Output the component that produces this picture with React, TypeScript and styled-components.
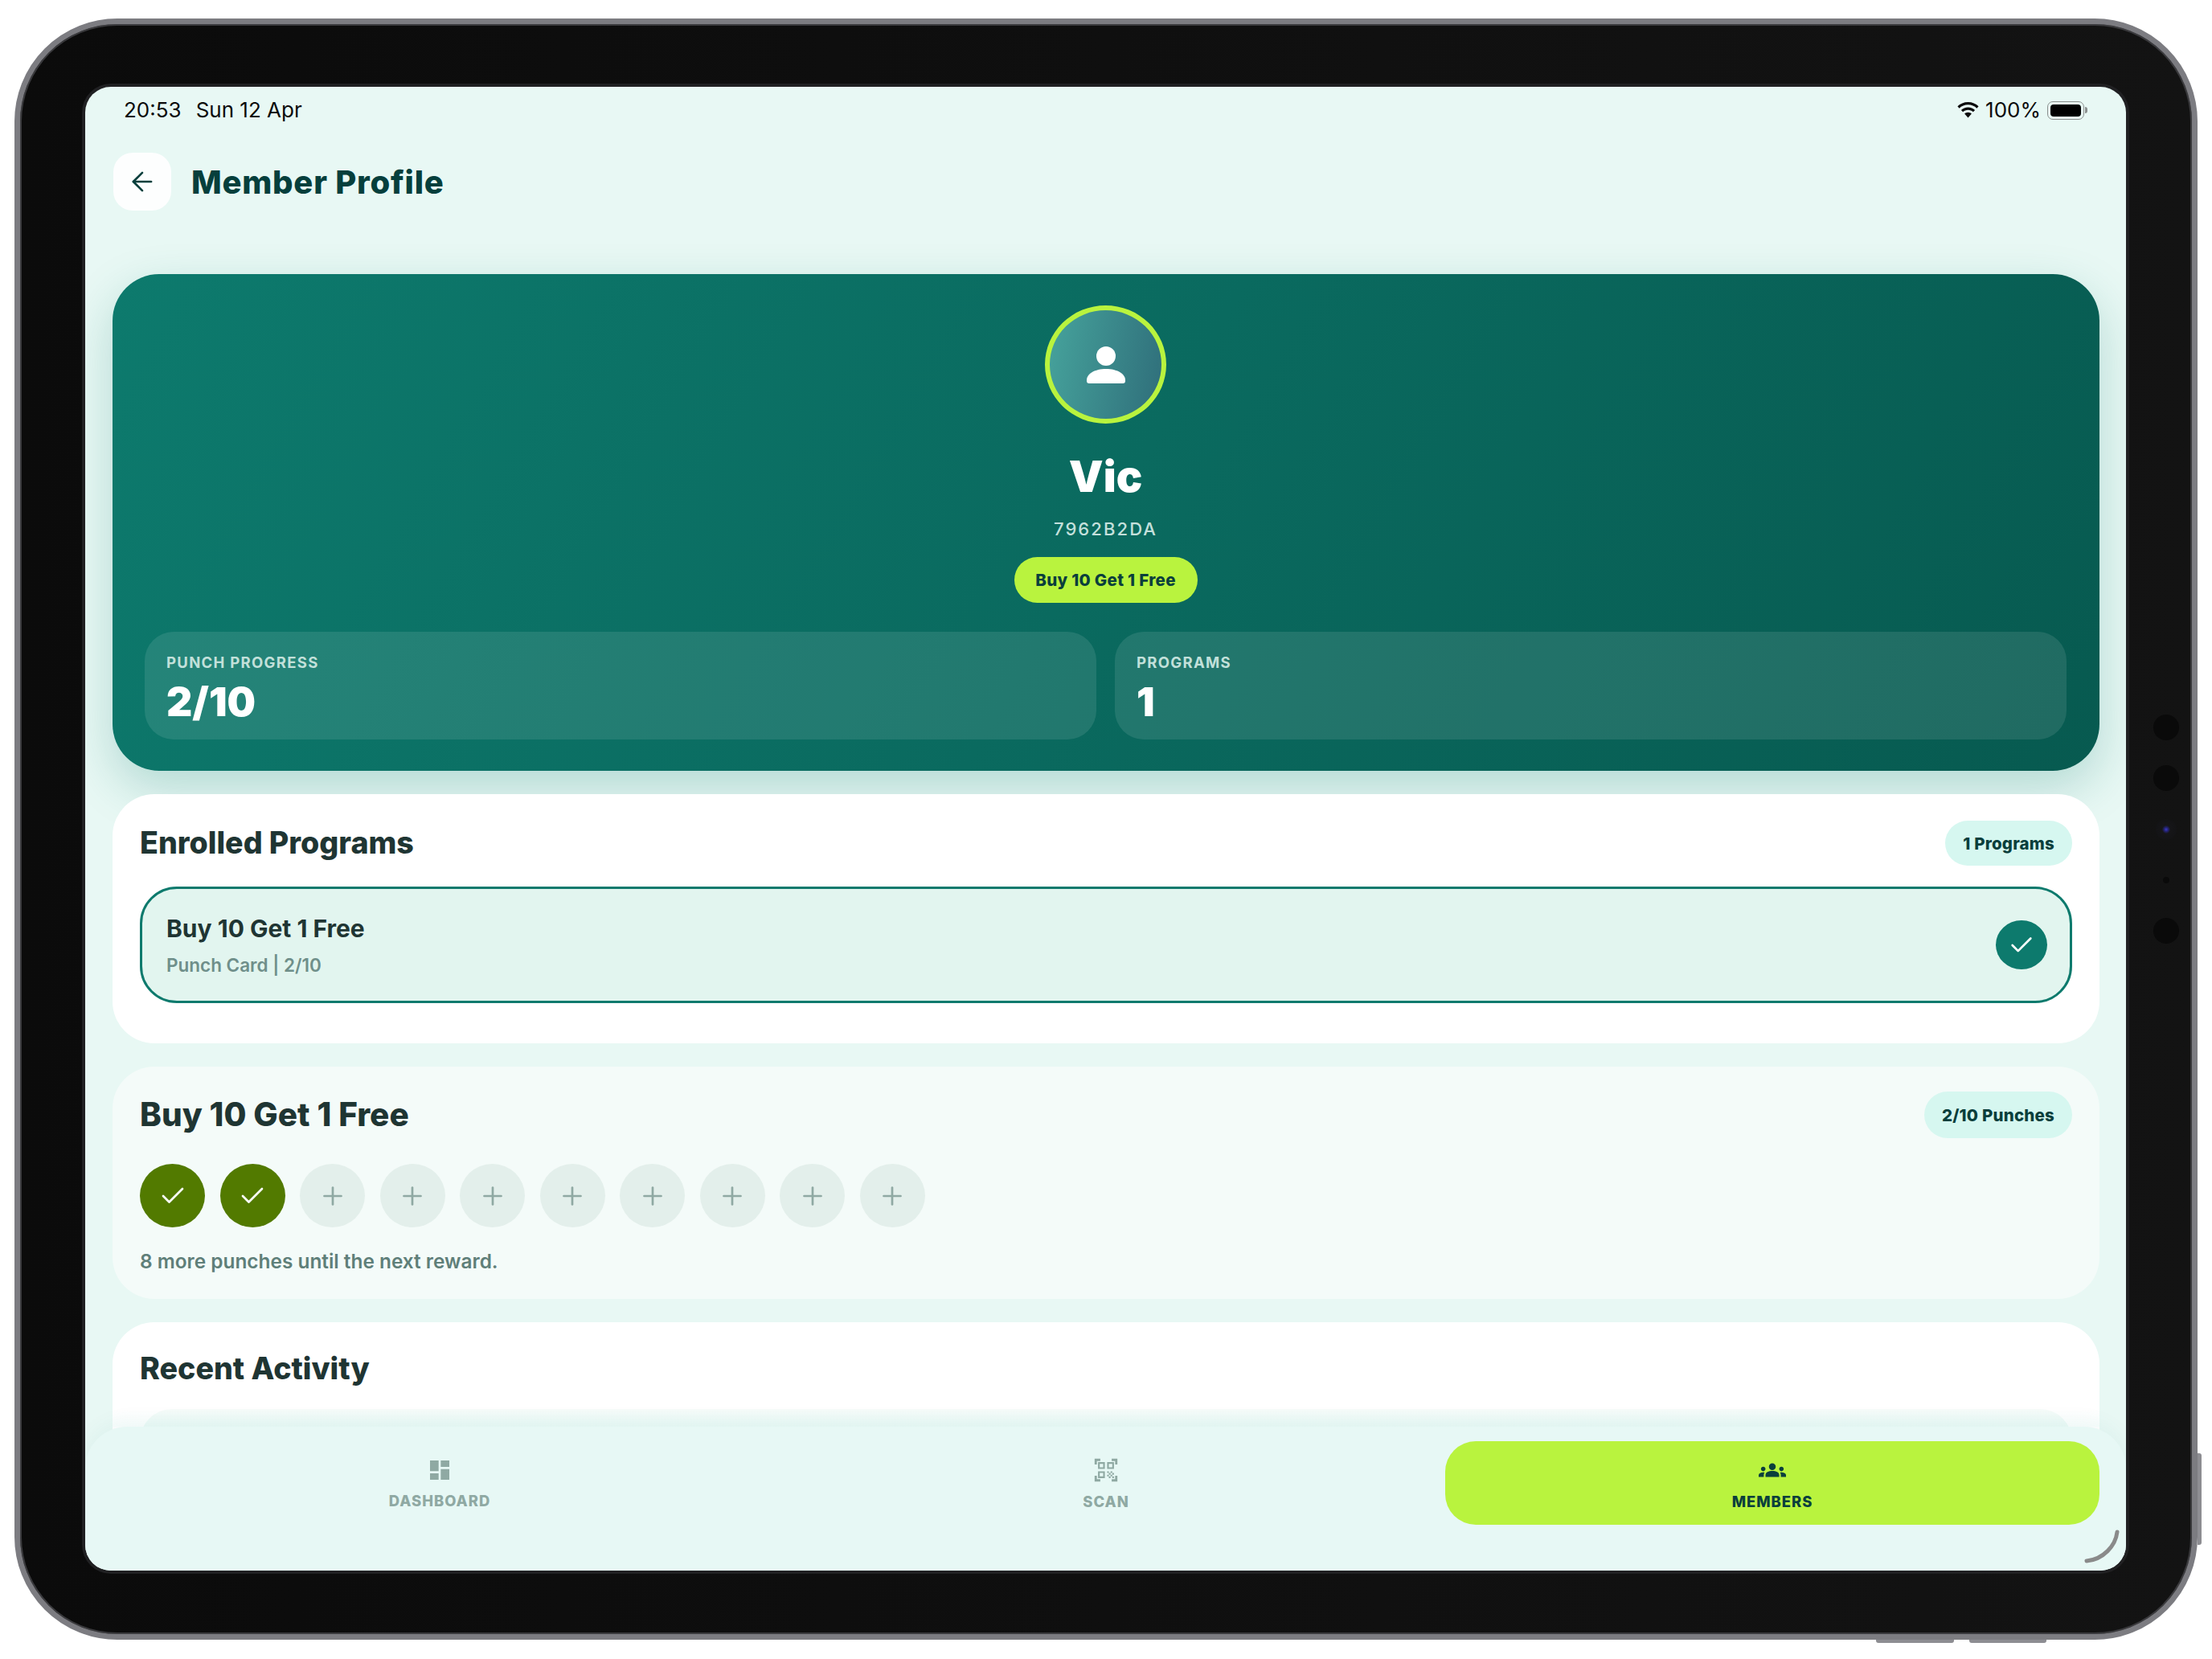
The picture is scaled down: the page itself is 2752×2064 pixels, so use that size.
import React from "react";
import styled, { createGlobalStyle } from "styled-components";
import { ArrowLeft, Check, Plus } from "lucide-react";
import { MdDashboard, MdGroups, MdQrCodeScanner } from "react-icons/md";

const GlobalStyle = createGlobalStyle`
  html, body {
    margin: 0;
    padding: 0;
    background: #ffffff;
  }
  * {
    box-sizing: border-box;
  }
  body {
    font-family: Inter, "Liberation Sans", sans-serif;
  }
`;

const Page = styled.div`
  width: 2752px;
  height: 2064px;
  padding: 23px 0 0 18px;
  background: #ffffff;
`;

const Device = styled.div`
  position: relative;
  width: 2716px;
  height: 2017px;
  padding: 78px 82px 79px 81px;
  border: 7px solid #7c7c81;
  border-radius: 128px;
  background: linear-gradient(to right, #0b0b0b, #131313);
  box-shadow: inset 0 0 0 2px #3a3a3d;
`;

const SideButton = styled.div`
  position: absolute;
  right: -12px;
  top: 1778px;
  width: 5px;
  height: 114px;
  border-radius: 0 3px 3px 0;
  background: #8d8d92;
`;

const BottomButton = styled.div<{ $left: number; $width: number }>`
  position: absolute;
  bottom: -11px;
  left: ${(p) => p.$left}px;
  width: ${(p) => p.$width}px;
  height: 4px;
  border-radius: 0 0 3px 3px;
  background: #8d8d92;
`;

const Lens = styled.div<{ $top: number; $size: number }>`
  position: absolute;
  right: ${(p) => 32 - p.$size / 2}px;
  top: ${(p) => p.$top - p.$size / 2}px;
  width: ${(p) => p.$size}px;
  height: ${(p) => p.$size}px;
  border-radius: 50%;
  background: #0a0a0a;
`;

const CameraLens = styled(Lens)`
  background: radial-gradient(circle, #3a39c9 0, #23226f 14%, #161618 28%, #121214 100%);
`;

const Screen = styled.div`
  position: relative;
  width: 2539px;
  height: 1846px;
  overflow: hidden;
  border-radius: 32px;
  background: #e8f8f4;
  box-shadow: 0 0 0 4px #202022;
`;

const StatusBar = styled.div`
  display: flex;
  align-items: center;
  justify-content: space-between;
  height: 58px;
  padding: 0 52px 0 48px;
  font-size: 26px;
  line-height: 30px;
  color: #0b0b0b;
`;

const StatusGroup = styled.div<{ $gap: number }>`
  display: flex;
  align-items: center;
  gap: ${(p) => p.$gap}px;
`;

const Battery = styled.div`
  position: relative;
  width: 46px;
  height: 23px;
  padding: 3px;
  border: 1.5px solid #8b8f8e;
  border-radius: 7px;

  &::before {
    content: "";
    display: block;
    width: 100%;
    height: 100%;
    border-radius: 4px;
    background: #000000;
  }

  &::after {
    content: "";
    position: absolute;
    right: -5px;
    top: 6px;
    width: 3px;
    height: 8px;
    border-radius: 0 3px 3px 0;
    background: #8b8f8e;
  }
`;

const Header = styled.header`
  display: flex;
  align-items: center;
  gap: 25px;
  padding: 24px 33px 0 35px;
`;

const BackButton = styled.button`
  display: flex;
  align-items: center;
  justify-content: center;
  width: 72px;
  height: 72px;
  padding: 0;
  border: 0;
  border-radius: 24px;
  background: #fdfefe;
  color: #063f3c;
`;

const PageTitle = styled.h1`
  margin: 2px 0 0;
  font-size: 40px;
  line-height: 48px;
  font-weight: 800;
  letter-spacing: 0.75px;
  color: #063f3c;
`;

const Main = styled.main`
  display: flex;
  flex-direction: column;
  gap: 29px;
  padding: 79px 33px 0 34px;
`;

const Hero = styled.section`
  display: flex;
  flex-direction: column;
  align-items: center;
  height: 618px;
  padding: 39px 41px 0 40px;
  border-radius: 58px;
  background: linear-gradient(120deg, #0d7a6d 0%, #0a6a5f 50%, #075a50 100%);
  box-shadow: 0 22px 60px rgba(13, 122, 109, 0.24);
`;

const Avatar = styled.div`
  display: flex;
  align-items: center;
  justify-content: center;
  width: 151px;
  height: 147px;
  border: 6px solid #b9f33e;
  border-radius: 50%;
  background: linear-gradient(100deg, #46a39c, #2f6e7a);
`;

const Name = styled.h2`
  margin: 36px 0 0;
  font-size: 54px;
  line-height: 60px;
  font-weight: 900;
  color: #ffffff;
`;

const MemberId = styled.div`
  margin-top: 21px;
  font-size: 22px;
  line-height: 28px;
  font-weight: 500;
  letter-spacing: 2.1px;
  color: #c4e0dc;
`;

const ProgramPill = styled.div`
  display: flex;
  align-items: center;
  justify-content: center;
  width: 228px;
  height: 57px;
  margin-top: 21px;
  border-radius: 29px;
  background: #b9f33e;
  font-size: 20.5px;
  font-weight: 800;
  letter-spacing: 0.3px;
  color: #0a3f3c;
`;

const StatGrid = styled.div`
  display: grid;
  grid-template-columns: 1fr 1fr;
  gap: 23px;
  width: 100%;
  margin-top: 36px;
`;

const Stat = styled.div`
  height: 134px;
  padding: 26px 27px 0;
  border-radius: 36px;
  background: rgba(255, 255, 255, 0.1);
`;

const StatLabel = styled.div`
  font-size: 18.5px;
  line-height: 24px;
  font-weight: 700;
  letter-spacing: 1.3px;
  color: #c2e0da;
`;

const StatValue = styled.div`
  margin-top: 9px;
  font-size: 50px;
  line-height: 56px;
  font-weight: 900;
  color: #ffffff;
`;

const Card = styled.section<{ $tint?: boolean }>`
  padding: ${(p) => (p.$tint ? "31px 34px 32px" : "33px 34px 50px")};
  border-radius: 52px;
  background: ${(p) => (p.$tint ? "#f4fbf9" : "#ffffff")};
`;

const CardHeader = styled.div`
  display: flex;
  align-items: center;
  justify-content: space-between;
`;

const CardTitle = styled.h3<{ $big?: boolean }>`
  margin: 0;
  font-size: ${(p) => (p.$big ? 40.5 : 37.6)}px;
  line-height: 44px;
  font-weight: 800;
  color: #1f3533;
`;

const Badge = styled.div<{ $tall?: boolean }>`
  display: flex;
  align-items: center;
  height: ${(p) => (p.$tall ? 58 : 56)}px;
  padding: 0 22px;
  border-radius: 29px;
  background: #d6f7f0;
  font-size: 20.5px;
  font-weight: 800;
  letter-spacing: 0.2px;
  color: #0a3f3c;
`;

const ProgramRow = styled.div`
  display: flex;
  align-items: center;
  justify-content: space-between;
  height: 145px;
  margin-top: 26px;
  padding: 0 28px 0 30px;
  border: 3px solid #0d7a6d;
  border-radius: 46px;
  background: #e2f5ef;
`;

const ProgramName = styled.div`
  font-size: 30px;
  line-height: 36px;
  font-weight: 700;
  color: #1f3533;
`;

const ProgramMeta = styled.div`
  margin-top: 14px;
  font-size: 22.5px;
  line-height: 28px;
  font-weight: 600;
  color: #6f8f8a;
`;

const SelectedMark = styled.div`
  display: flex;
  align-items: center;
  justify-content: center;
  width: 64px;
  height: 61px;
  border-radius: 50%;
  background: #0d7a6d;
  color: #ffffff;
`;

const PunchRow = styled.div`
  display: flex;
  gap: 18.5px;
  margin-top: 32px;
`;

const Punch = styled.div<{ $done: boolean }>`
  display: flex;
  align-items: center;
  justify-content: center;
  width: 81px;
  height: 79px;
  border-radius: 50%;
  background: ${(p) => (p.$done ? "#527a00" : "#e3efeb")};
  color: ${(p) => (p.$done ? "#ffffff" : "#8fa9a3")};
`;

const PunchNote = styled.p`
  margin: 27px 0 0;
  font-size: 24.4px;
  line-height: 30px;
  font-weight: 600;
  color: #5f7f79;
`;

const RecentCard = styled.section`
  height: 400px;
  padding: 36px 34px 0;
  border-radius: 52px;
  background: #ffffff;
`;

const ActivityRow = styled.div`
  height: 150px;
  margin-top: 28px;
  border-radius: 40px;
  background: linear-gradient(to bottom, #f7fcfa 0, #e8f8f4 22px);
`;

const BottomNav = styled.nav`
  position: absolute;
  left: 0;
  right: 0;
  bottom: 0;
  display: grid;
  grid-template-columns: repeat(3, 1fr);
  gap: 15px;
  height: 179px;
  padding: 18px 33px 0 34px;
  border-radius: 52px 52px 0 0;
  background: #e7f8f5;
  box-shadow: 0 -6px 26px rgba(13, 122, 109, 0.05);

  &::before {
    content: "";
    position: absolute;
    left: 34px;
    right: 33px;
    top: -22px;
    height: 22px;
    background: linear-gradient(to bottom, rgba(231, 248, 245, 0), rgba(231, 248, 245, 0.35));
  }
`;

const Tab = styled.div<{ $active?: boolean }>`
  display: flex;
  flex-direction: column;
  align-items: center;
  justify-content: center;
  gap: 11px;
  height: 104px;
  border-radius: 38px;
  background: ${(p) => (p.$active ? "#b9f33e" : "transparent")};
  color: ${(p) => (p.$active ? "#0a3f3c" : "#8fa9a3")};
`;

const TabLabel = styled.span`
  font-size: 18.4px;
  line-height: 22px;
  font-weight: 800;
  letter-spacing: 1px;
`;

const CornerArc = styled.svg`
  position: absolute;
  right: 8px;
  bottom: 9px;
`;

const PUNCHES = Array.from({ length: 10 }, (_, i) => i < 2);

export default function App() {
  return (
    <Page>
      <GlobalStyle />
      <Device>
        <SideButton />
        <BottomButton $left={2309} $width={97} />
        <BottomButton $left={2425} $width={96} />
        <Lens $top={875} $size={32} />
        <Lens $top={938} $size={32} />
        <CameraLens $top={1002} $size={26} />
        <Lens $top={1065} $size={8} />
        <Lens $top={1128} $size={32} />
        <Screen>
          <StatusBar>
            <StatusGroup $gap={18}>
              <span>20:53</span>
              <span>Sun 12 Apr</span>
            </StatusGroup>
            <StatusGroup $gap={8}>
              <svg width="27" height="20" viewBox="0 0 27 20">
                <path
                  d="M13.5 0C8.4 0 3.8 2 .4 5.3l2.2 2.4C5.4 4.9 9.2 3.2 13.5 3.2s8.1 1.7 10.9 4.5l2.2-2.4C23.2 2 18.6 0 13.5 0Z"
                  fill="#0b0b0b"
                />
                <path
                  d="M13.5 6.4c-3.3 0-6.3 1.3-8.6 3.5l2.2 2.4c1.7-1.6 3.9-2.6 6.4-2.6s4.7 1 6.4 2.6l2.2-2.4c-2.3-2.2-5.3-3.5-8.6-3.5Z"
                  fill="#0b0b0b"
                />
                <path
                  d="M13.5 12.8c-1.7 0-3.3.7-4.4 1.8l4.4 4.9 4.4-4.9c-1.1-1.1-2.7-1.8-4.4-1.8Z"
                  fill="#0b0b0b"
                />
              </svg>
              <span>100%</span>
              <Battery />
            </StatusGroup>
          </StatusBar>

          <Header>
            <BackButton>
              <ArrowLeft size={38} strokeWidth={1.7} />
            </BackButton>
            <PageTitle>Member Profile</PageTitle>
          </Header>

          <Main>
            <Hero>
              <Avatar>
                <svg width="48" height="46" viewBox="0 0 48 46">
                  <circle cx="24" cy="12" r="12" fill="#ffffff" />
                  <path
                    d="M0 42C0 34 10 28 24 28s24 6 24 14v1a3 3 0 0 1-3 3H3a3 3 0 0 1-3-3Z"
                    fill="#ffffff"
                  />
                </svg>
              </Avatar>
              <Name>Vic</Name>
              <MemberId>7962B2DA</MemberId>
              <ProgramPill>Buy 10 Get 1 Free</ProgramPill>
              <StatGrid>
                <Stat>
                  <StatLabel>PUNCH PROGRESS</StatLabel>
                  <StatValue>2/10</StatValue>
                </Stat>
                <Stat>
                  <StatLabel>PROGRAMS</StatLabel>
                  <StatValue>1</StatValue>
                </Stat>
              </StatGrid>
            </Hero>

            <Card>
              <CardHeader>
                <CardTitle>Enrolled Programs</CardTitle>
                <Badge>1 Programs</Badge>
              </CardHeader>
              <ProgramRow>
                <div>
                  <ProgramName>Buy 10 Get 1 Free</ProgramName>
                  <ProgramMeta>Punch Card | 2/10</ProgramMeta>
                </div>
                <SelectedMark>
                  <Check size={34} strokeWidth={1.9} />
                </SelectedMark>
              </ProgramRow>
            </Card>

            <Card $tint>
              <CardHeader>
                <CardTitle $big>Buy 10 Get 1 Free</CardTitle>
                <Badge $tall>2/10 Punches</Badge>
              </CardHeader>
              <PunchRow>
                {PUNCHES.map((done, i) => (
                  <Punch key={i} $done={done}>
                    {done ? <Check size={36} strokeWidth={1.8} /> : <Plus size={36} strokeWidth={1.8} />}
                  </Punch>
                ))}
              </PunchRow>
              <PunchNote>8 more punches until the next reward.</PunchNote>
            </Card>

            <RecentCard>
              <CardTitle>Recent Activity</CardTitle>
              <ActivityRow />
            </RecentCard>
          </Main>

          <BottomNav>
            <Tab>
              <MdDashboard size={32} />
              <TabLabel>DASHBOARD</TabLabel>
            </Tab>
            <Tab>
              <MdQrCodeScanner size={34} />
              <TabLabel>SCAN</TabLabel>
            </Tab>
            <Tab $active>
              <MdGroups size={34} />
              <TabLabel>MEMBERS</TabLabel>
            </Tab>
          </BottomNav>

          <CornerArc width="44" height="42" viewBox="0 0 44 42">
            <path
              d="M41 3C39 20 24 37 3 39"
              fill="none"
              stroke="#8a8a8a"
              strokeWidth="5"
              strokeLinecap="round"
            />
          </CornerArc>
        </Screen>
      </Device>
    </Page>
  );
}
